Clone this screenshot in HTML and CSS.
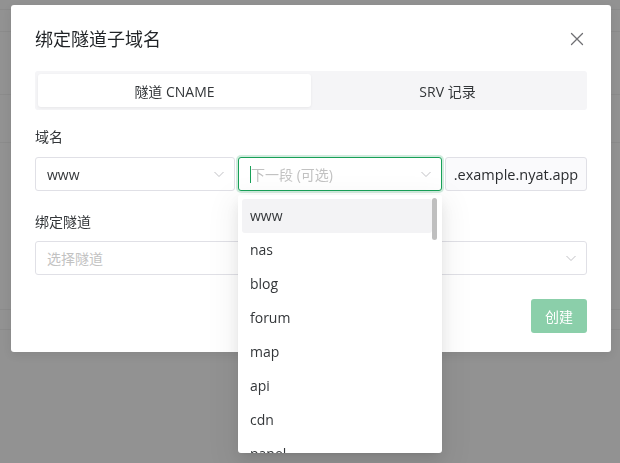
FILE: index.html
```html
<!DOCTYPE html>
<html lang="zh-CN">
<head>
<meta charset="utf-8">
<title>绑定隧道子域名</title>
<link rel="stylesheet" href="styles.css">
</head>
<body>
<div class="page">
  <div class="pg-row pg-r1"></div>
  <div class="pg-row pg-r2"></div>
  <div class="pg-row pg-r3"></div>
  <div class="pg-row pg-r4"></div>
  <div class="pg-row pg-r5"></div>
  <div class="pg-row pg-r6"></div>
</div>
<div class="overlay">
  <div class="modal">
    <div class="modal-header">
      <h2 class="modal-title">绑定隧道子域名</h2>
      <button class="close-btn" aria-label="关闭">
        <svg width="14" height="14" viewBox="0 0 14 14"><path d="M1.5 1.5 L12.5 12.5 M12.5 1.5 L1.5 12.5" stroke="#6f6f73" stroke-width="1.3" fill="none" stroke-linecap="round"/></svg>
      </button>
    </div>
    <div class="tabs">
      <div class="tab tab-active">隧道 CNAME</div>
      <div class="tab">SRV 记录</div>
    </div>
    <div class="form-item">
      <div class="label">域名</div>
      <div class="domain-row">
        <div class="select sel-first">
          <span class="value">www</span>
          <svg class="chev" width="12" height="12" viewBox="0 0 12 12"><path d="M1.5 4 L6 8.5 L10.5 4" stroke="#c2c2c6" stroke-width="1" fill="none"/></svg>
        </div>
        <div class="select-wrap">
          <div class="select sel-focus">
            <span class="caret"></span><span class="placeholder">下一段 (可选)</span>
            <svg class="chev" width="12" height="12" viewBox="0 0 12 12"><path d="M1.5 4 L6 8.5 L10.5 4" stroke="#c2c2c6" stroke-width="1" fill="none"/></svg>
          </div>
          <div class="menu">
            <div class="menu-list">
              <div class="opt opt-hover">www</div>
              <div class="opt">nas</div>
              <div class="opt">blog</div>
              <div class="opt">forum</div>
              <div class="opt">map</div>
              <div class="opt">api</div>
              <div class="opt">cdn</div>
              <div class="opt">panel</div>
            </div>
            <div class="scrollbar"></div>
          </div>
        </div>
        <div class="suffix">.example.nyat.app</div>
      </div>
    </div>
    <div class="form-item form-item-2">
      <div class="label">绑定隧道</div>
      <div class="select sel-full">
        <span class="placeholder">选择隧道</span>
        <svg class="chev" width="12" height="12" viewBox="0 0 12 12"><path d="M1.5 4 L6 8.5 L10.5 4" stroke="#c2c2c6" stroke-width="1" fill="none"/></svg>
      </div>
    </div>
    <div class="footer">
      <button class="btn-create">创建</button>
    </div>
  </div>
</div>
</body>
</html>
```
FILE: styles.css
```css
* { box-sizing: border-box; }
html, body { margin: 0; height: 100%; }
body {
  background: #929292;
  font-family: "Open Sans", "Noto Sans CJK SC", sans-serif;
  font-size: 14px;
  color: #333639;
  overflow: hidden;
}
.page { display: flex; flex-direction: column; }
.pg-row { border-bottom: 1px solid #8b8b8b; }
.pg-r1 { height: 10px; }
.pg-r2 { height: 22px; }
.pg-r3 { height: 63px; }
.pg-r4 { height: 48px; }
.pg-r5 { height: 167px; }
.pg-r6 { height: 20px; }

.overlay {
  position: fixed;
  inset: 0;
  padding: 5px 0 0 11px;
}
.modal {
  width: 600px;
  height: 347px;
  background: #fff;
  border-radius: 3px;
  padding: 20px 24px 19px 24px;
  box-shadow: 0 3px 10px rgba(0,0,0,0.08);
}
.modal-header {
  display: flex;
  align-items: center;
  justify-content: space-between;
  height: 28px;
}
.modal-title {
  margin: 0;
  font-size: 18px;
  font-weight: 400;
  color: #1f2225;
  line-height: 28px;
}
.close-btn {
  border: 0;
  background: none;
  padding: 0;
  width: 14px;
  height: 14px;
  margin-right: 3px;
  display: flex;
}
.tabs {
  margin-top: 18px;
  height: 39px;
  background: #f5f5f7;
  border-radius: 3px;
  padding: 3px;
  display: flex;
}
.tab {
  flex: 1;
  display: flex;
  align-items: center;
  justify-content: center;
  color: #333639;
  border-radius: 3px;
}
.tab-active {
  background: #fff;
  box-shadow: 0 1px 3px rgba(0,0,0,0.06);
}
.form-item { margin-top: 16px; }
.form-item-2 { margin-top: 20px; }
.label {
  line-height: 22px;
  height: 22px;
  margin-bottom: 9px;
  color: #333639;
}
.form-item-2 .label { margin-bottom: 8px; }
.domain-row {
  display: flex;
  gap: 3px;
  height: 34px;
}
.select {
  position: relative;
  height: 34px;
  border: 1px solid #e0e0e6;
  border-radius: 3px;
  display: flex;
  align-items: center;
  padding: 0 11px;
  background: #fff;
}
.select .chev { position: absolute; right: 9px; top: 10px; }
.sel-first { width: 200px; }
.select-wrap { position: relative; width: 204px; }
.sel-focus {
  width: 204px;
  border-color: #18a058;
  box-shadow: 0 0 0 2px rgba(24,160,88,0.2);
  padding-left: 11px;
}
.caret {
  width: 1px;
  height: 17px;
  background: #18a058;
}
.placeholder { color: #c2c2c2; }
.value { color: #333639; }
.suffix {
  flex: 1;
  height: 34px;
  border: 1px solid #e0e0e6;
  border-radius: 3px;
  background: #fafafc;
  display: flex;
  align-items: center;
  justify-content: center;
  color: #2b2d30;
  font-size: 14.5px;
}
.sel-full { width: 100%; }
.footer {
  margin-top: 24px;
  display: flex;
  justify-content: flex-end;
}
.btn-create {
  width: 56px;
  height: 34px;
  border: 0;
  border-radius: 3px;
  background: #8bcfaa;
  color: #fff;
  font-family: inherit;
  font-size: 14px;
  padding: 0;
}
.menu {
  position: absolute;
  top: 38px;
  left: 0;
  width: 204px;
  height: 258px;
  background: #fff;
  border-radius: 3px;
  box-shadow: 0 3px 6px -4px rgba(0,0,0,.12), 0 6px 16px 0 rgba(0,0,0,.08), 0 9px 28px 8px rgba(0,0,0,.05);
  overflow: hidden;
  z-index: 5;
}
.menu-list { padding: 4px 10px 4px 4px; }
.opt {
  height: 34px;
  line-height: 34px;
  padding-left: 8px;
  border-radius: 3px;
  color: #333639;
}
.opt-hover { background: #f3f3f5; }
.scrollbar {
  position: absolute;
  right: 5px;
  top: 3px;
  width: 5px;
  height: 42px;
  border-radius: 3px;
  background: rgba(0,0,0,0.25);
}
```
